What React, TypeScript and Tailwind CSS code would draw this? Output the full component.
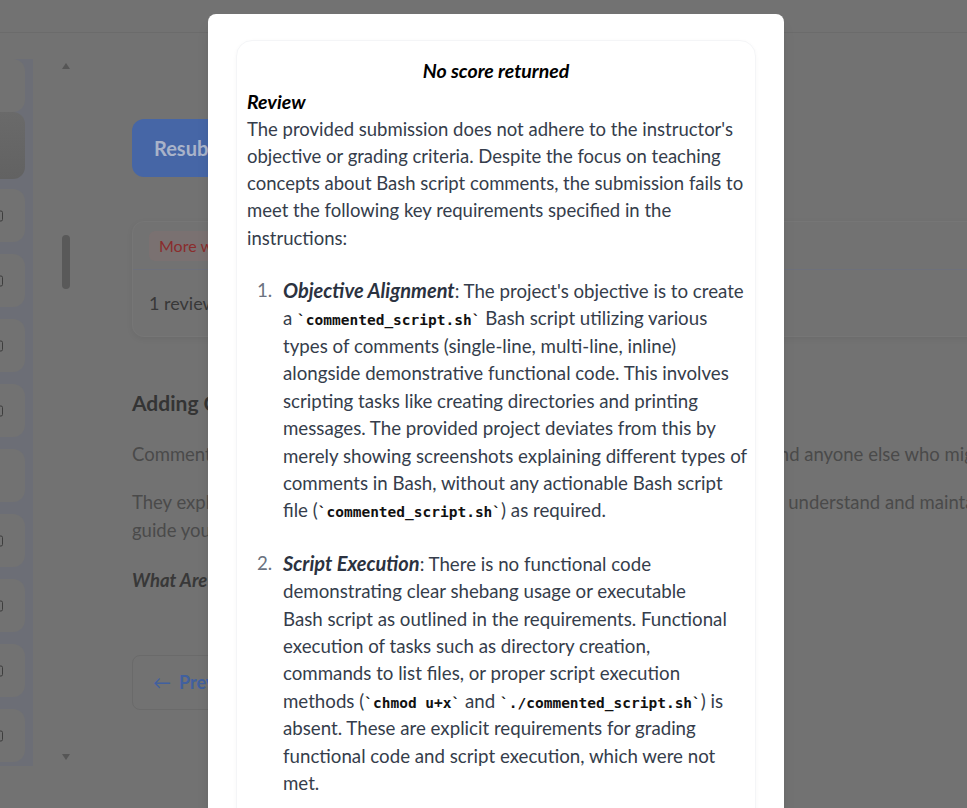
const font = "font-['Lato','Liberation_Sans',sans-serif]";

const Code = ({ children }: { children: string }) => (
  <code className="font-['DejaVu_Sans_Mono','Liberation_Mono',monospace] text-[14.5px] leading-[20px] font-bold text-[#111]">
    `{children}`
  </code>
);

const SidebarCard = ({ dark = false, icon = true, h = "h-[53px]" }: { dark?: boolean; icon?: boolean; h?: string }) => (
  <div
    className={`relative w-[25px] ${h} rounded-r-xl overflow-hidden ${
      dark ? "bg-gradient-to-b from-[#6a6a6a] to-[#626262]" : "bg-[#727272]"
    }`}
  >
    {icon && (
      <div className="absolute left-[-8px] top-1/2 -translate-y-1/2 w-[11px] h-[11px] border border-[#3d3d3d] rounded-[2px]" />
    )}
  </div>
);

const Item = ({ n, children }: { n: number; children: React.ReactNode }) => (
  <li className="flex">
    <span className="w-[36px] shrink-0 pl-[10px] text-[#6b7280]">{n}.</span>
    <div>{children}</div>
  </li>
);

export default function App() {
  return (
    <div className={`relative w-full h-[808px] overflow-hidden bg-[#727272] ${font}`}>
      {/* dimmed page behind the dialog */}
      <div className="h-[33px] border-b border-[#6b6b6b]" />
      <div className="flex">
        <div className="pt-[26px] flex">
          <div className="w-[33px] h-[707px] bg-[#6c6e76] flex flex-col">
            <SidebarCard h="h-[53px]" icon={false} />
            <SidebarCard dark h="h-[67px]" icon={false} />
            <div className="flex flex-col gap-[12px] mt-[10px]">
              <SidebarCard />
              <SidebarCard />
              <SidebarCard />
              <SidebarCard />
              <SidebarCard icon={false} />
              <SidebarCard />
              <SidebarCard />
              <SidebarCard />
              <SidebarCard />
            </div>
          </div>
          <div className="ml-[28px] w-[9px] flex flex-col items-center pt-[4px]">
            <div className="w-0 h-0 border-l-[4px] border-r-[4px] border-b-[6px] border-l-transparent border-r-transparent border-b-[#565656]" />
            <div className="mt-[166px] w-[8px] h-[54px] rounded-full bg-[#595959]" />
            <div className="mt-[465px] w-0 h-0 border-l-[4px] border-r-[4px] border-t-[6px] border-l-transparent border-r-transparent border-t-[#565656]" />
          </div>
        </div>

        <div className="ml-[62px] flex-1 pt-[86px] min-w-0">
          <div className="w-[300px] h-[58px] rounded-xl bg-[#4666a6] flex items-center pl-[22px] text-[20px] font-bold text-[#a9b3c9]">
            Resubmit project
          </div>

          <div className="mt-[44px] mr-[-40px] rounded-xl border border-[#767676] shadow-[0_2px_6px_rgba(0,0,0,0.06)]">
            <div className="h-[48px] border-b border-[#6d707b] flex items-center pl-[16px]">
              <span className="px-[10px] py-[3px] rounded-md bg-[#7a7171] text-[#8a2c2c] text-[16px]">
                More work needed
              </span>
            </div>
            <div className="h-[66px] flex items-center pl-[16px] text-[18px] text-[#383838]">1 review</div>
          </div>

          <div className="mt-[52px] text-[21px] font-bold text-[#343434] leading-[28px]">Adding Comments in Bash</div>
          <p className="mt-[23px] text-[18.5px] leading-[28px] text-[#4a4a4a] whitespace-nowrap">
            Comments are an essential part of writing a clean Bash script, as they help you and anyone else who might read it later.
          </p>
          <p className="mt-[20px] text-[18.5px] leading-[28px] text-[#4a4a4a] whitespace-nowrap">
            They explain what your script does and why it was written, making it far easier to understand and maintain your scripts.
            <br />
            guide you through the logic of a script.
          </p>
          <div className="mt-[22px] text-[18.5px] font-bold italic text-[#383838] leading-[28px]">What Are Comments?</div>

          <div className="mt-[61px] w-[300px] h-[55px] rounded-lg border border-[#6a6a6a] flex items-center pl-[20px] gap-[8px] text-[#41609f] text-[18px] font-bold">
            <span className="text-[18px] font-normal">←</span>
            Previous
          </div>
        </div>
      </div>

      {/* dialog */}
      <div className="absolute left-[208px] top-[14px] w-[576px] h-[830px] bg-white rounded-lg px-[28px] pt-[26px] shadow-lg">
        <div className="min-h-[820px] rounded-2xl border border-[#f4f5f7] shadow-[0_1px_4px_rgba(0,0,0,0.03)] px-[10px] pt-[16px] text-[#353d4b] text-[18.5px] leading-[27.3px]">
          <div className="text-center text-[19.5px] font-bold italic text-black">No score returned</div>
          <div className="mt-[4px] text-[19.5px] font-bold italic text-black">Review</div>
          <p className="mb-[25px]">
            The provided submission does not adhere to the instructor's objective or grading criteria. Despite the focus on
            teaching concepts about Bash script comments, the submission fails to meet the following key requirements
            specified in the instructions:
          </p>
          <ol className="text-[18.7px] leading-[27.4px] space-y-[25px] whitespace-nowrap">
            <Item n={1}>
              <strong className="italic text-[#2b3240] text-[20px]">Objective Alignment</strong>: The project's objective is
              to create
              <br />a <Code>commented_script.sh</Code> Bash script utilizing various
              <br />
              types of comments (single-line, multi-line, inline)
              <br />
              alongside demonstrative functional code. This involves
              <br />
              scripting tasks like creating directories and printing
              <br />
              messages. The provided project deviates from this by
              <br />
              merely showing screenshots explaining different types of
              <br />
              comments in Bash, without any actionable Bash script
              <br />
              file (<Code>commented_script.sh</Code>) as required.
            </Item>
            <Item n={2}>
              <strong className="italic text-[#2b3240] text-[20px]">Script Execution</strong>: There is no functional code
              <br />
              demonstrating clear shebang usage or executable
              <br />
              Bash script as outlined in the requirements. Functional
              <br />
              execution of tasks such as directory creation,
              <br />
              commands to list files, or proper script execution
              <br />
              methods (<Code>chmod u+x</Code> and <Code>./commented_script.sh</Code>) is
              <br />
              absent. These are explicit requirements for grading
              <br />
              functional code and script execution, which were not
              <br />
              met.
            </Item>
          </ol>
        </div>
      </div>
    </div>
  );
}
